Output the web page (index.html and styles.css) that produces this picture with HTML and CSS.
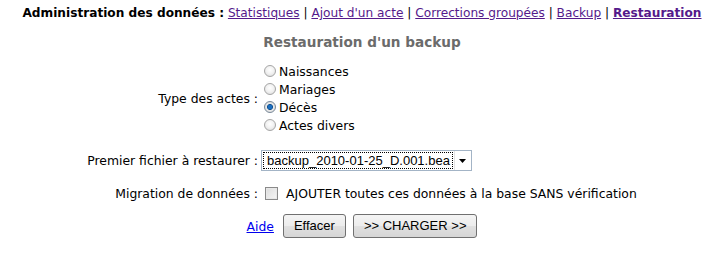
FILE: index.html
```html
<!DOCTYPE html>
<html lang="fr">
<head>
<meta charset="utf-8">
<title>Restauration</title>
<link rel="stylesheet" href="styles.css">
</head>
<body>
<div class="menu"><b>Administration des données :</b> <a class="v" href="#">Statistiques</a> | <a class="v" href="#">Ajout d'un acte</a> | <a class="v" href="#">Corrections groupées</a> | <a class="v" href="#">Backup</a> | <a class="v cur" href="#">Restauration</a></div>
<h2 class="title">Restauration d'un backup</h2>
<table class="form">
  <tr>
    <td class="lbl">Type des actes :</td>
    <td class="fld">
      <label class="opt"><span class="radio"></span>Naissances</label>
      <label class="opt"><span class="radio"></span>Mariages</label>
      <label class="opt"><span class="radio on"></span>Décès</label>
      <label class="opt"><span class="radio"></span>Actes divers</label>
    </td>
  </tr>
  <tr class="gap"><td colspan="2"></td></tr>
  <tr>
    <td class="lbl">Premier fichier à restaurer :</td>
    <td class="fld"><span class="select"><span class="sel-text">backup_2010-01-25_D.001.bea</span><span class="sel-btn"><svg width="7" height="4" viewBox="0 0 7 4"><path d="M0 0h7L3.5 4z" fill="#000"/></svg></span></span></td>
  </tr>
  <tr class="gap1"><td colspan="2"></td></tr>
  <tr>
    <td class="lbl">Migration de données :</td>
    <td class="fld"><label class="opt chk"><span class="checkbox"></span>AJOUTER toutes ces données à la base SANS vérification</label></td>
  </tr>
  <tr class="gap2"><td colspan="2"></td></tr>
  <tr>
    <td colspan="2" class="actions"><a class="help" href="#">Aide</a><span class="btn">Effacer</span><span class="btn">&gt;&gt; CHARGER &gt;&gt;</span></td>
  </tr>
</table>
</body>
</html>
```
FILE: styles.css
```css
html, body { margin: 0; padding: 0; background: #fff; }
body {
  font-family: Verdana, "DejaVu Sans", sans-serif;
  font-size: 12.4px;
  color: #000;
  width: 724px;
}
.menu {
  text-align: center;
  font-size: 12.15px;
  padding-top: 5px;
  line-height: 16px;
  white-space: nowrap;
}
.menu a.v { color: #551a8b; }
.menu a.cur { font-weight: bold; }
.title {
  margin: 12px 0 0;
  text-align: center;
  font-size: 13.6px;
  font-weight: bold;
  color: #6b6b6b;
  line-height: 18px;
}
.form {
  margin: 11px auto 0;
  border-collapse: collapse;
}
.form td { padding: 0; }
.lbl {
  text-align: right;
  vertical-align: middle;
  padding-right: 3px !important;
  white-space: nowrap;
}
.fld { text-align: left; white-space: nowrap; }
.opt {
  display: flex;
  align-items: center;
  height: 18px;
  gap: 3px;
}
.radio {
  width: 12px;
  height: 12px;
  border-radius: 50%;
  box-sizing: border-box;
  border: 1px solid #a6a6a6;
  background: radial-gradient(circle at 50% 40%, #fff 0%, #f1f1f1 50%, #d4d4d4 100%);
  margin-left: 3px;
}
.radio.on {
  border-color: #7a8a9a;
  background: radial-gradient(circle, #1b6fc0 0 2px, #0b4a8a 2.5px, #e9e9e9 3.5px, #d0d0d0 100%);
}
.select {
  display: inline-flex;
  align-items: stretch;
  height: 21px;
  box-sizing: border-box;
  border: 1px solid #a3b4c6;
  background: #fff;
  font-family: Arial, "Liberation Sans", sans-serif;
  font-size: 13px;
  vertical-align: middle;
}
.sel-text {
  border: 1px dotted #000;
  margin: 1px;
  padding: 0 2px 0 3px;
  line-height: 16px;
}
.sel-btn {
  width: 16px;
  display: flex;
  align-items: center;
  justify-content: center;
  border-left: 1px solid #e3e3e3;
}
.chk { gap: 8px; }
.checkbox {
  width: 13px;
  height: 13px;
  box-sizing: border-box;
  border: 1px solid #8a8a8a;
  background: linear-gradient(135deg, #dcdcdc, #f6f6f6);
  box-shadow: inset 0 0 0 1px #e8e8e8;
  margin-left: 4px;
}
.gap td { height: 16px; }
.gap1 td { height: 13px; }
.gap2 td { height: 12px; }
.actions {
  text-align: center;
  height: 24px;
}
.help { color: #0000ee; margin-right: 9px; vertical-align: middle; }
.btn {
  display: inline-block;
  box-sizing: border-box;
  height: 24px;
  line-height: 22px;
  padding: 0 10px;
  border: 1px solid #707070;
  border-radius: 3px;
  background: linear-gradient(#f4f4f4 0%, #ececec 50%, #e0e0e0 51%, #d6d6d6 100%);
  font-family: Arial, "Liberation Sans", sans-serif;
  font-size: 13px;
  margin-right: 7px;
  vertical-align: middle;
}
.btn:last-child { margin-right: 0; }
```
